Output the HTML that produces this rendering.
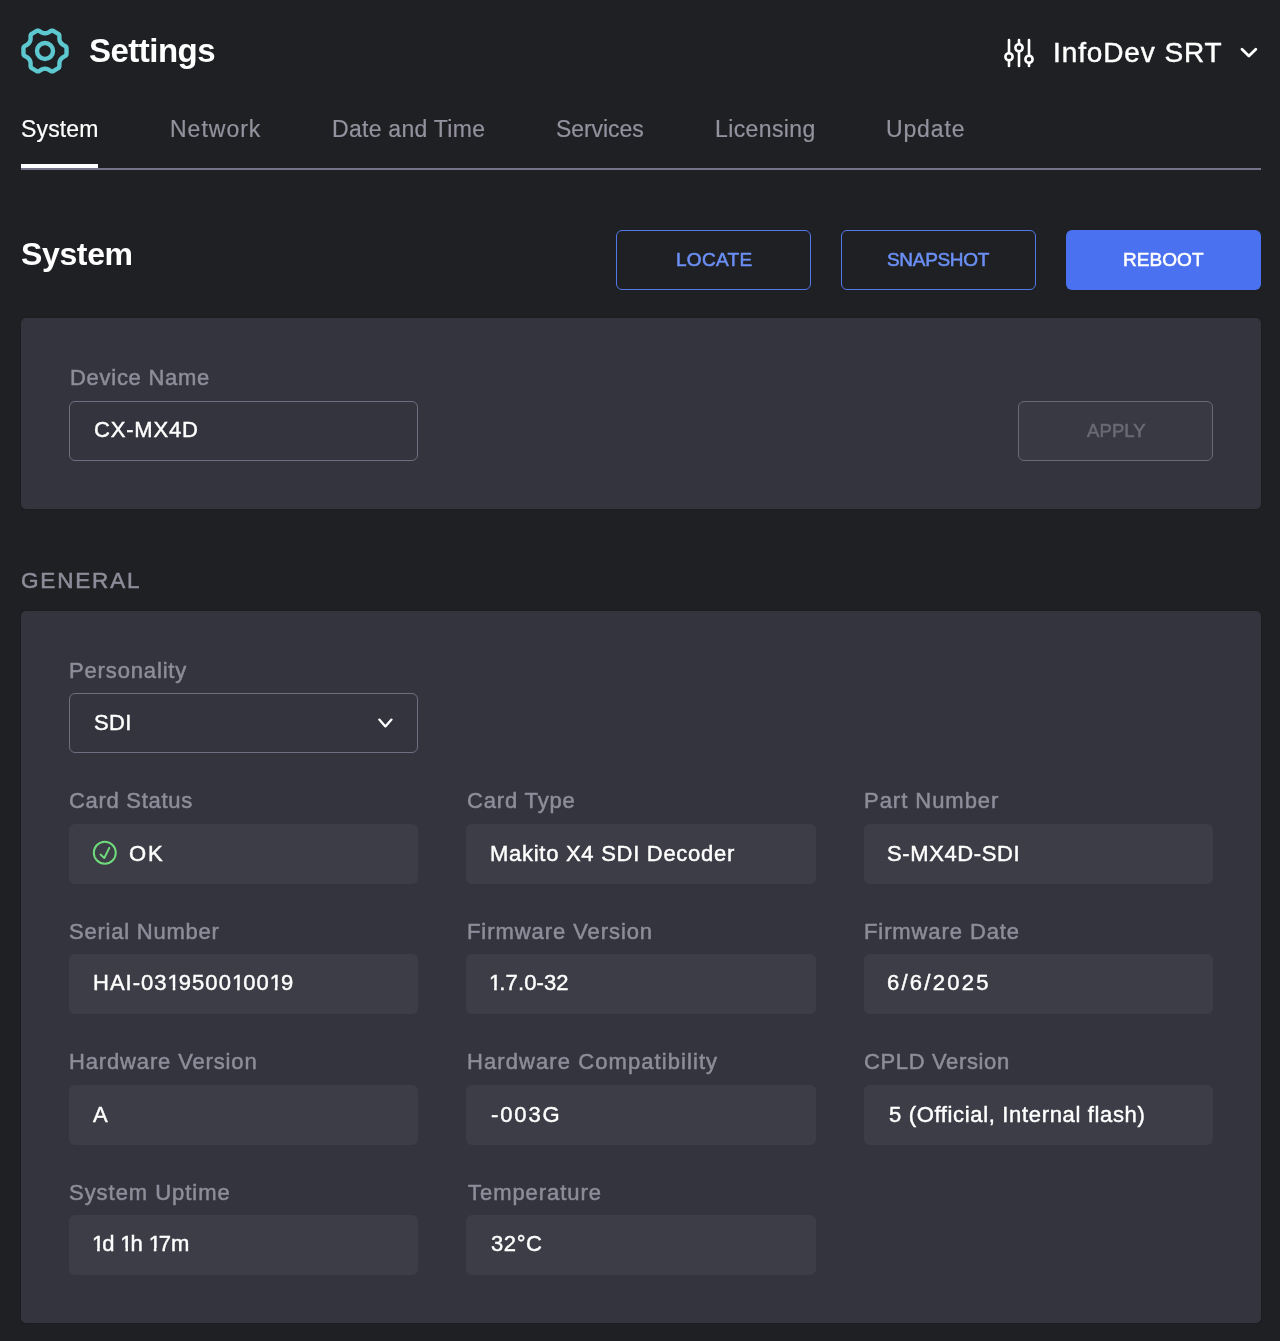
<!DOCTYPE html>
<html><head><meta charset="utf-8"><title>Settings</title>
<style>
html,body{margin:0;padding:0;background:#1f2023;}
body{width:1280px;height:1341px;position:relative;overflow:hidden;font-family:"Liberation Sans",sans-serif;color:#fff;}
.t{position:absolute;white-space:nowrap;line-height:1;will-change:transform;}
.b{font-weight:bold;}
.tab{color:#93929e;}
.lbl{color:#8e8d9a;}
.box{position:absolute;box-sizing:border-box;}
.card{background:#34343e;border-radius:5px;box-shadow:0 0 2px rgba(0,0,0,0.25);}
.fld{background:#3d3d47;border-radius:6px;}
.inp{border:1px solid #6f6d80;border-radius:6px;}
.btn{border:1px solid #5378e8;border-radius:6px;}
svg{position:absolute;overflow:visible;}
.one{display:inline-block;margin-right:-2px;clip-path:polygon(0 0,100% 0,100% 0.68em,0.35em 0.68em,0.35em 100%,0.235em 100%,0.235em 0.68em,0 0.68em);}
</style></head><body>
<svg style="left:21px;top:27px" width="48" height="48" viewBox="0 0 48 48"><path d="M45.54,24.00L45.54,24.94L45.54,25.88L45.52,26.83L45.34,27.76L44.74,28.60L43.71,29.28L42.61,29.87L41.69,30.44L40.94,31.02L40.32,31.61L39.81,32.23L39.38,32.88L39.03,33.57L38.75,34.33L38.54,35.16L38.42,36.10L38.39,37.19L38.43,38.43L38.35,39.66L37.93,40.60L37.21,41.22L36.40,41.71L35.58,42.18L34.77,42.65L33.96,43.12L33.14,43.60L32.30,44.05L31.41,44.36L30.39,44.26L29.28,43.71L28.22,43.05L27.27,42.54L26.39,42.18L25.57,41.94L24.78,41.80L24.00,41.76L23.22,41.80L22.43,41.94L21.61,42.18L20.73,42.54L19.78,43.05L18.72,43.71L17.61,44.26L16.59,44.36L15.70,44.05L14.86,43.60L14.04,43.12L13.23,42.65L12.42,42.18L11.60,41.71L10.79,41.22L10.07,40.60L9.65,39.66L9.57,38.43L9.61,37.19L9.58,36.10L9.46,35.16L9.25,34.33L8.97,33.57L8.62,32.88L8.19,32.23L7.68,31.61L7.06,31.02L6.31,30.44L5.39,29.87L4.29,29.28L3.26,28.60L2.66,27.76L2.48,26.83L2.46,25.88L2.46,24.94L2.46,24.00L2.46,23.06L2.46,22.12L2.48,21.17L2.66,20.24L3.26,19.40L4.29,18.72L5.39,18.13L6.31,17.56L7.06,16.98L7.68,16.39L8.19,15.77L8.62,15.12L8.97,14.43L9.25,13.67L9.46,12.84L9.58,11.90L9.61,10.81L9.57,9.57L9.65,8.34L10.07,7.40L10.79,6.78L11.60,6.29L12.42,5.82L13.23,5.35L14.04,4.88L14.86,4.40L15.70,3.95L16.59,3.64L17.61,3.74L18.72,4.29L19.78,4.95L20.73,5.46L21.61,5.82L22.43,6.06L23.22,6.20L24.00,6.24L24.78,6.20L25.57,6.06L26.39,5.82L27.27,5.46L28.22,4.95L29.28,4.29L30.39,3.74L31.41,3.64L32.30,3.95L33.14,4.40L33.96,4.88L34.77,5.35L35.58,5.82L36.40,6.29L37.21,6.78L37.93,7.40L38.35,8.34L38.43,9.57L38.39,10.81L38.42,11.90L38.54,12.84L38.75,13.67L39.03,14.43L39.38,15.12L39.81,15.77L40.32,16.39L40.94,16.98L41.69,17.56L42.61,18.13L43.71,18.72L44.74,19.40L45.34,20.24L45.52,21.17L45.54,22.12L45.54,23.06Z" fill="none" stroke="#5ec8d0" stroke-width="4.4" stroke-linejoin="round"/><circle cx="24" cy="24" r="8" fill="none" stroke="#5ec8d0" stroke-width="4.4"/></svg>
<div class="t b " style="left:88.60px;top:34.27px;font-size:33px;letter-spacing:-0.51px;color:#fff;">Settings</div>
<svg style="left:1000px;top:36px" width="40" height="34" viewBox="0 0 40 34"><g stroke="#fff" stroke-width="2.6" stroke-linecap="round" fill="none"><line x1="9" y1="4" x2="9" y2="17"/><line x1="9" y1="24.5" x2="9" y2="30"/><line x1="19" y1="4" x2="19" y2="8"/><line x1="19" y1="15.5" x2="19" y2="30"/><line x1="29" y1="4" x2="29" y2="19.5"/><line x1="29" y1="27" x2="29" y2="30"/><circle cx="9" cy="20.8" r="3.6"/><circle cx="19" cy="11.8" r="3.6"/><circle cx="29" cy="23.3" r="3.6"/></g></svg>
<div class="t " style="left:1053.00px;top:38.90px;font-size:28px;letter-spacing:0.89px;color:#fff;-webkit-text-stroke:0.45px currentColor;">InfoDev SRT</div>
<svg style="left:1240px;top:46.6px" width="18" height="12" viewBox="0 0 18 12"><path d="M2,2.2 L8.9,9 L15.8,2.2" fill="none" stroke="#fff" stroke-width="2.8" stroke-linecap="round" stroke-linejoin="round"/></svg>
<div class="t " style="left:20.60px;top:118.33px;font-size:23px;letter-spacing:0.16px;color:#fff;-webkit-text-stroke:0.2px currentColor;">System</div>
<div class="t tab" style="left:169.60px;top:118.33px;font-size:23px;letter-spacing:1.00px;-webkit-text-stroke:0.2px currentColor;">Network</div>
<div class="t tab" style="left:331.60px;top:118.33px;font-size:23px;letter-spacing:0.28px;-webkit-text-stroke:0.2px currentColor;">Date and Time</div>
<div class="t tab" style="left:555.50px;top:118.33px;font-size:23px;letter-spacing:-0.06px;-webkit-text-stroke:0.2px currentColor;">Services</div>
<div class="t tab" style="left:715.00px;top:118.33px;font-size:23px;letter-spacing:0.38px;-webkit-text-stroke:0.2px currentColor;">Licensing</div>
<div class="t tab" style="left:886.20px;top:118.33px;font-size:23px;letter-spacing:0.86px;-webkit-text-stroke:0.2px currentColor;">Update</div>
<div class="box" style="left:21px;top:168px;width:1240px;height:2px;background:#75738a"></div>
<div class="box" style="left:21px;top:164px;width:77px;height:4px;background:#fff"></div>
<div class="t b " style="left:21.10px;top:237.91px;font-size:32px;letter-spacing:-0.36px;color:#fff;">System</div>
<div class="box btn" style="left:616px;top:230px;width:195px;height:60px"></div>
<div class="box btn" style="left:841px;top:230px;width:195px;height:60px"></div>
<div class="box" style="left:1066px;top:230px;width:195px;height:60px;background:#4a71f0;border-radius:6px"></div>
<div class="t " style="left:675.90px;top:250.32px;font-size:19px;letter-spacing:0.30px;color:#6b8ff5;-webkit-text-stroke:0.55px currentColor;">LOCATE</div>
<div class="t " style="left:887.00px;top:250.32px;font-size:19px;letter-spacing:-0.31px;color:#6b8ff5;-webkit-text-stroke:0.55px currentColor;">SNAPSHOT</div>
<div class="t " style="left:1123.30px;top:250.32px;font-size:19px;letter-spacing:0.06px;color:#fff;-webkit-text-stroke:0.55px currentColor;">REBOOT</div>
<div class="box card" style="left:21px;top:318px;width:1240px;height:191px"></div>
<div class="t lbl" style="left:69.60px;top:367.38px;font-size:22px;letter-spacing:0.72px;-webkit-text-stroke:0.5px currentColor;">Device Name</div>
<div class="box inp" style="left:69px;top:401px;width:349px;height:60px"></div>
<div class="t " style="left:94.00px;top:419.38px;font-size:22px;letter-spacing:0.82px;color:#fff;-webkit-text-stroke:0.45px currentColor;">CX-MX4D</div>
<div class="box" style="left:1018px;top:401px;width:195px;height:60px;border:1px solid #6a6976;border-radius:6px;background:#393943"></div>
<div class="t " style="left:1086.60px;top:421.64px;font-size:18.5px;letter-spacing:0.10px;color:#6a6976;-webkit-text-stroke:0.55px currentColor;">APPLY</div>
<div class="t lbl" style="left:21.10px;top:569.85px;font-size:22.5px;letter-spacing:1.83px;-webkit-text-stroke:0.5px currentColor;">GENERAL</div>
<div class="box card" style="left:21px;top:611px;width:1240px;height:712px"></div>
<div class="t lbl" style="left:69.40px;top:659.58px;font-size:22px;letter-spacing:0.85px;-webkit-text-stroke:0.5px currentColor;">Personality</div>
<div class="box inp" style="left:69px;top:693px;width:349px;height:60px"></div>
<div class="t " style="left:93.50px;top:711.78px;font-size:22px;letter-spacing:0.30px;color:#fff;-webkit-text-stroke:0.45px currentColor;">SDI</div>
<svg style="left:375px;top:715px" width="20" height="16" viewBox="0 0 20 16"><path d="M4.3,4.6 L10.4,11.4 L16.5,4.6" fill="none" stroke="#fff" stroke-width="2.3" stroke-linecap="round" stroke-linejoin="round"/></svg>
<div class="t lbl" style="left:68.80px;top:789.58px;font-size:22px;letter-spacing:0.70px;-webkit-text-stroke:0.5px currentColor;">Card Status</div>
<div class="box fld" style="left:69.00px;top:824px;width:349.33px;height:60px"></div>
<div class="t " style="left:129.00px;top:842.58px;font-size:22px;letter-spacing:1.80px;color:#fff;-webkit-text-stroke:0.45px currentColor;">OK</div>
<div class="t lbl" style="left:466.50px;top:789.58px;font-size:22px;letter-spacing:0.84px;-webkit-text-stroke:0.5px currentColor;">Card Type</div>
<div class="box fld" style="left:466.33px;top:824px;width:349.33px;height:60px"></div>
<div class="t " style="left:490.30px;top:842.58px;font-size:22px;letter-spacing:0.72px;color:#fff;-webkit-text-stroke:0.45px currentColor;">Makito X4 SDI Decoder</div>
<div class="t lbl" style="left:864.00px;top:789.58px;font-size:22px;letter-spacing:0.97px;-webkit-text-stroke:0.5px currentColor;">Part Number</div>
<div class="box fld" style="left:863.67px;top:824px;width:349.33px;height:60px"></div>
<div class="t " style="left:887.25px;top:842.58px;font-size:22px;letter-spacing:0.61px;color:#fff;-webkit-text-stroke:0.45px currentColor;">S-MX4D-SDI</div>
<div class="t lbl" style="left:69.00px;top:921.48px;font-size:22px;letter-spacing:0.77px;-webkit-text-stroke:0.5px currentColor;">Serial Number</div>
<div class="box fld" style="left:69.00px;top:954px;width:349.33px;height:60px"></div>
<div class="t " style="left:93.25px;top:972.38px;font-size:22px;letter-spacing:1.02px;color:#fff;-webkit-text-stroke:0.45px currentColor;">HAI-03<span class="one">1</span>9500<span class="one">1</span>00<span class="one">1</span>9</div>
<div class="t lbl" style="left:466.50px;top:921.48px;font-size:22px;letter-spacing:0.93px;-webkit-text-stroke:0.5px currentColor;">Firmware Version</div>
<div class="box fld" style="left:466.33px;top:954px;width:349.33px;height:60px"></div>
<div class="t " style="left:488.50px;top:972.38px;font-size:22px;letter-spacing:0.11px;color:#fff;-webkit-text-stroke:0.45px currentColor;"><span class="one">1</span>.7.0-32</div>
<div class="t lbl" style="left:864.00px;top:921.48px;font-size:22px;letter-spacing:0.90px;-webkit-text-stroke:0.5px currentColor;">Firmware Date</div>
<div class="box fld" style="left:863.67px;top:954px;width:349.33px;height:60px"></div>
<div class="t " style="left:887.25px;top:972.38px;font-size:22px;letter-spacing:2.25px;color:#fff;-webkit-text-stroke:0.45px currentColor;">6/6/2025</div>
<div class="t lbl" style="left:69.00px;top:1051.48px;font-size:22px;letter-spacing:0.85px;-webkit-text-stroke:0.5px currentColor;">Hardware Version</div>
<div class="box fld" style="left:69.00px;top:1085px;width:349.33px;height:60px"></div>
<div class="t " style="left:93.25px;top:1103.68px;font-size:22px;letter-spacing:0.00px;color:#fff;-webkit-text-stroke:0.45px currentColor;">A</div>
<div class="t lbl" style="left:466.50px;top:1051.48px;font-size:22px;letter-spacing:1.08px;-webkit-text-stroke:0.5px currentColor;">Hardware Compatibility</div>
<div class="box fld" style="left:466.33px;top:1085px;width:349.33px;height:60px"></div>
<div class="t " style="left:491.00px;top:1103.68px;font-size:22px;letter-spacing:1.88px;color:#fff;-webkit-text-stroke:0.45px currentColor;">-003G</div>
<div class="t lbl" style="left:864.00px;top:1051.48px;font-size:22px;letter-spacing:0.64px;-webkit-text-stroke:0.5px currentColor;">CPLD Version</div>
<div class="box fld" style="left:863.67px;top:1085px;width:349.33px;height:60px"></div>
<div class="t " style="left:888.70px;top:1103.68px;font-size:22px;letter-spacing:0.66px;color:#fff;-webkit-text-stroke:0.45px currentColor;">5 (Official, Internal flash)</div>
<div class="t lbl" style="left:69.00px;top:1182.48px;font-size:22px;letter-spacing:0.96px;-webkit-text-stroke:0.5px currentColor;">System Uptime</div>
<div class="box fld" style="left:69.00px;top:1215px;width:349.33px;height:60px"></div>
<div class="t " style="left:91.75px;top:1233.18px;font-size:22px;letter-spacing:-0.09px;color:#fff;-webkit-text-stroke:0.45px currentColor;"><span class="one">1</span>d <span class="one">1</span>h <span class="one">1</span>7m</div>
<div class="t lbl" style="left:467.50px;top:1182.48px;font-size:22px;letter-spacing:0.95px;-webkit-text-stroke:0.5px currentColor;">Temperature</div>
<div class="box fld" style="left:466.33px;top:1215px;width:349.33px;height:60px"></div>
<div class="t " style="left:491.00px;top:1233.18px;font-size:22px;letter-spacing:0.58px;color:#fff;-webkit-text-stroke:0.45px currentColor;">32°C</div>
<svg style="left:91px;top:839px" width="30" height="30" viewBox="0 0 30 30"><circle cx="13.8" cy="13.7" r="11" fill="none" stroke="#6fda7c" stroke-width="2"/><path d="M9.5,15.6 L13.3,19.0 L18.3,8.9" fill="none" stroke="#6fda7c" stroke-width="2" stroke-linecap="round" stroke-linejoin="round"/></svg>
</body></html>
